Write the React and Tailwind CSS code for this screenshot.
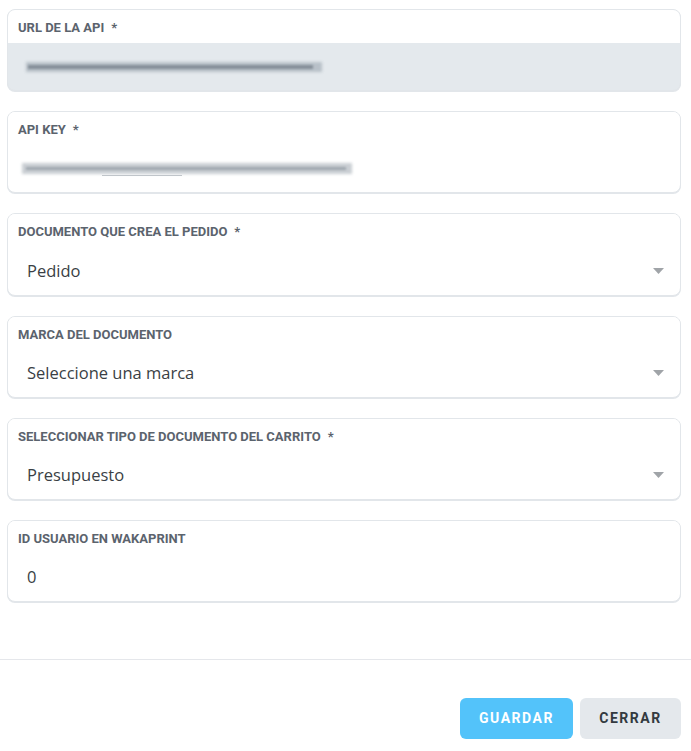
import React from "react";

function Caret() {
  return (
    <svg width="11" height="6" viewBox="0 0 11 6" className="shrink-0">
      <path d="M0 0 L11 0 L5.5 6 Z" fill="#a0a4a8" />
    </svg>
  );
}

function Field({ label, required, children, gray, select }) {
  return (
    <div className={`border border-[#e2e6ea] rounded-[8px] overflow-hidden shadow-[0_1px_0_#e2e6ea] ${gray ? "bg-[#e4e9ed]" : "bg-white"}`}>
      <div className="h-[33px] bg-white pl-[10px] pt-[10px] text-[13px] leading-[16px] font-bold text-[#5b636d] font-['Roboto',sans-serif]">
        {label}
        {required && <span className="ml-[7px]">*</span>}
      </div>
      <div className="h-[47.2px] flex items-center pl-[19px] pr-[16px] text-[16.5px] text-[#3a3f45] font-['Open_Sans',sans-serif]">
        <div className="flex-1">{children}</div>
        {select && <Caret />}
      </div>
    </div>
  );
}

export default function App() {
  return (
    <div className="w-[691px] h-[751px] bg-white flex flex-col">
      <div className="pl-[7px] pr-[10px] pt-[9px] flex flex-col gap-[20px]">
        <Field label="URL DE LA API" required gray>
          <div className="relative h-[20px] w-[300px] -ml-[1px]">
            <div className="absolute left-0 top-[5px] w-[296px] h-[10px] bg-[#b8c0c8] blur-[1.5px]" />
            <div className="absolute left-[2px] top-[8px] w-[285px] h-[4px] bg-[#7a848e] blur-[1px] opacity-80" />
          </div>
        </Field>
        <Field label="API KEY" required>
          <div className="relative h-[20px] w-[340px] -ml-[5px]">
            <div className="absolute left-0 top-[4px] w-[330px] h-[11px] bg-[#c9ced3] blur-[1.5px]" />
            <div className="absolute left-[4px] top-[8px] w-[320px] h-[3px] bg-[#959ea6] blur-[1px] opacity-80" />
            <div className="absolute left-[80px] top-[16px] w-[80px] h-[1px] bg-[#c0c5ca] blur-[0.5px]" />
          </div>
        </Field>
        <Field label="DOCUMENTO QUE CREA EL PEDIDO" required select>
          Pedido
        </Field>
        <Field label="MARCA DEL DOCUMENTO" select>
          Seleccione una marca
        </Field>
        <Field label="SELECCIONAR TIPO DE DOCUMENTO DEL CARRITO" required select>
          Presupuesto
        </Field>
        <Field label="ID USUARIO EN WAKAPRINT">0</Field>
      </div>
      <div className="mt-[57px] border-t border-[#e5e7eb]" />
      <div className="flex justify-end gap-[7px] pr-[10px] pt-[38px]">
        <button className="w-[113px] h-[41px] rounded-[6px] bg-[#53c3fa] text-white text-[14px] font-bold tracking-[1.5px] font-['Roboto',sans-serif]">
          GUARDAR
        </button>
        <button className="w-[101px] h-[41px] rounded-[6px] bg-[#e4e8ec] text-[#333a40] text-[14px] font-bold tracking-[1.5px] font-['Roboto',sans-serif]">
          CERRAR
        </button>
      </div>
    </div>
  );
}
